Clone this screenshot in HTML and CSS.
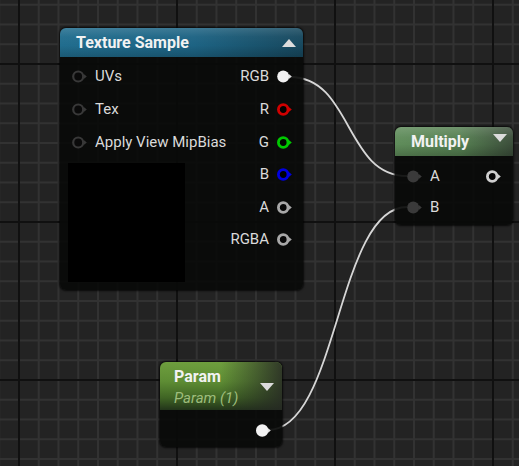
FILE: index.html
```html
<!DOCTYPE html>
<html>
<head>
<meta charset="utf-8">
<link rel="stylesheet" href="styles.css">
</head>
<body>
<div class="canvas">
  <svg class="wires" width="519" height="466" viewBox="0 0 519 466">
    <path d="M 290 77 C 352 77, 345 176, 407 176" />
    <path d="M 268 430 C 338 430, 337 207, 407 207" />
  </svg>

  <div class="node tex">
    <div class="head head-blue">
      <span class="title">Texture Sample</span>
      <svg class="tri" width="14" height="8" viewBox="0 0 14 8"><polygon points="0,8 14,8 7,0"/></svg>
    </div>
    <div class="body tex-body">
      <div class="col inputs">
        <div class="row in"><svg class="pin" width="15" height="13" viewBox="0 0 15 13"><circle class="p-empty" cx="6.2" cy="6.5" r="5"/><polygon class="arr-dark" points="11.8,4 14.8,6.5 11.8,9"/></svg><span class="lbl">UVs</span></div>
        <div class="row in"><svg class="pin" width="15" height="13" viewBox="0 0 15 13"><circle class="p-empty" cx="6.2" cy="6.5" r="5"/><polygon class="arr-dark" points="11.8,4 14.8,6.5 11.8,9"/></svg><span class="lbl">Tex</span></div>
        <div class="row in"><svg class="pin" width="15" height="13" viewBox="0 0 15 13"><circle class="p-empty" cx="6.2" cy="6.5" r="5"/><polygon class="arr-dark" points="11.8,4 14.8,6.5 11.8,9"/></svg><span class="lbl">Apply View MipBias</span></div>
        <div class="preview"></div>
      </div>
      <div class="col outputs">
        <div class="row out"><span class="lbl">RGB</span><svg class="pin" width="15" height="13" viewBox="0 0 15 13"><circle class="p-white" cx="6.2" cy="6.5" r="6"/><polygon class="arr-white" points="11.8,4 14.8,6.5 11.8,9"/></svg></div>
        <div class="row out"><span class="lbl">R</span><svg class="pin" width="15" height="13" viewBox="0 0 15 13"><circle class="p-red" cx="6.2" cy="6.5" r="4.8"/><polygon class="arr-red" points="11.8,4 14.8,6.5 11.8,9"/></svg></div>
        <div class="row out"><span class="lbl">G</span><svg class="pin" width="15" height="13" viewBox="0 0 15 13"><circle class="p-green" cx="6.2" cy="6.5" r="4.8"/><polygon class="arr-green" points="11.8,4 14.8,6.5 11.8,9"/></svg></div>
        <div class="row out"><span class="lbl">B</span><svg class="pin" width="15" height="13" viewBox="0 0 15 13"><circle class="p-blue" cx="6.2" cy="6.5" r="4.8"/><polygon class="arr-blue" points="11.8,4 14.8,6.5 11.8,9"/></svg></div>
        <div class="row out"><span class="lbl">A</span><svg class="pin" width="15" height="13" viewBox="0 0 15 13"><circle class="p-grey" cx="6.2" cy="6.5" r="4.8"/><polygon class="arr-grey" points="11.8,4 14.8,6.5 11.8,9"/></svg></div>
        <div class="row out"><span class="lbl">RGBA</span><svg class="pin" width="15" height="13" viewBox="0 0 15 13"><circle class="p-grey" cx="6.2" cy="6.5" r="4.8"/><polygon class="arr-grey" points="11.8,4 14.8,6.5 11.8,9"/></svg></div>
      </div>
    </div>
  </div>

  <div class="node mul">
    <div class="head head-sage">
      <span class="title">Multiply</span>
      <svg class="tri tri-down" width="14" height="8" viewBox="0 0 14 8"><polygon points="0,0 14,0 7,8"/></svg>
    </div>
    <div class="body mul-body">
      <div class="col inputs">
        <div class="row in row-31"><svg class="pin" width="15" height="13" viewBox="0 0 15 13"><circle class="p-conn" cx="6.2" cy="6.5" r="6"/><polygon class="arr-conn" points="11.8,4 14.8,6.5 11.8,9"/></svg><span class="lbl">A</span></div>
        <div class="row in row-31"><svg class="pin" width="15" height="13" viewBox="0 0 15 13"><circle class="p-conn" cx="6.2" cy="6.5" r="6"/><polygon class="arr-conn" points="11.8,4 14.8,6.5 11.8,9"/></svg><span class="lbl">B</span></div>
      </div>
      <div class="col outputs">
        <div class="row out row-31"><svg class="pin" width="15" height="13" viewBox="0 0 15 13"><circle class="p-light" cx="6.2" cy="6.5" r="4.8"/><polygon class="arr-light" points="11.8,4 14.8,6.5 11.8,9"/></svg></div>
      </div>
    </div>
  </div>

  <div class="node param">
    <div class="head head-green">
      <div class="titles">
        <span class="title">Param</span>
        <span class="sub">Param (1)</span>
      </div>
      <svg class="tri" width="14" height="8" viewBox="0 0 14 8"><polygon points="0,0 14,0 7,8"/></svg>
    </div>
    <div class="body param-body">
      <div class="row out row-31"><svg class="pin" width="15" height="13" viewBox="0 0 15 13"><circle class="p-white" cx="6.2" cy="6.5" r="6.2"/><polygon class="arr-white" points="11.8,4 14.8,6.5 11.8,9"/></svg></div>
    </div>
  </div>
</div>
</body>
</html>
```

FILE: styles.css
```css
html, body {
  margin: 0;
  padding: 0;
  background: #232323;
}

.canvas {
  position: relative;
  width: 519px;
  height: 466px;
  overflow: hidden;
  font-family: Roboto, "Liberation Sans", sans-serif;
  background-color: #232323;
  background-image:
    linear-gradient(to right, #101010 2px, transparent 2px),
    linear-gradient(to bottom, #101010 2px, transparent 2px),
    linear-gradient(to right, #323232 2px, transparent 2px),
    linear-gradient(to bottom, #323232 2px, transparent 2px);
  background-size: 158px 158px, 158px 158px, 19.75px 19.75px, 19.75px 19.75px;
  background-position: 18px 63px, 18px 63px, 18px 63px, 18px 63px;
}

.wires {
  position: absolute;
  left: 0;
  top: 0;
}
.wires path {
  fill: none;
  stroke: #d6d6d6;
  stroke-width: 1.8;
}

.node {
  position: absolute;
  display: flex;
  flex-direction: column;
  border-radius: 6px;
  background: rgba(9, 10, 9, 0.92);
  box-shadow: 0 0 2px 1px rgba(0, 0, 0, 0.75);
  overflow: hidden;
}

.tex { left: 60px; top: 28px; width: 243px; height: 262px; }
.mul { left: 395px; top: 127px; width: 118px; height: 98px; }
.param { left: 160px; top: 362px; width: 122px; height: 85px; }

.head {
  display: flex;
  align-items: center;
  justify-content: space-between;
  height: 29px;
  padding: 0 7px 0 16px;
  box-sizing: border-box;
  flex: none;
}

.head-blue {
  background:
    linear-gradient(180deg, rgba(255,255,255,0.14) 0, rgba(255,255,255,0.03) 30%, rgba(0,0,0,0) 60%, rgba(0,0,0,0.18) 100%),
    linear-gradient(90deg, #216d8e 0%, #1d6383 55%, #17485e 100%);
}

.head-sage {
  background:
    linear-gradient(180deg, rgba(255,255,255,0.16) 0, rgba(255,255,255,0.04) 35%, rgba(0,0,0,0) 60%, rgba(0,0,0,0.2) 100%),
    linear-gradient(90deg, #5f8c5a 0%, #557f51 55%, #3b4d3a 100%);
  padding-right: 6px;
}

.head-green {
  height: 48px;
  align-items: flex-start;
  padding: 6px 8px 0 14px;
  background:
    linear-gradient(90deg, rgba(40,40,40,0) 50%, rgba(38,40,36,0.85) 100%),
    linear-gradient(180deg, #6e9e3e 0%, #5e8d34 40%, #3f6424 75%, #22341a 100%);
}

.title {
  color: #f2f2f2;
  font-weight: bold;
  font-size: 16px;
  line-height: 18px;
}

.titles {
  display: flex;
  flex-direction: column;
  gap: 3px;
}

.sub {
  color: #9ebd7c;
  font-style: italic;
  font-size: 15px;
  line-height: 18px;
}

.tri polygon { fill: #dcdcdc; }
.tri-down { margin-bottom: 7px; }
.head-green .tri { margin-top: 15px; }

.body {
  flex: 1;
  display: flex;
  justify-content: space-between;
}

.tex-body { padding: 3.7px 11px 0 8px; }
.mul-body { padding: 4.5px 12px 0 12px; }
.param-body { padding: 4.5px 11px 0 0; justify-content: flex-end; }

.col {
  display: flex;
  flex-direction: column;
}
.outputs { align-items: flex-end; }

.row {
  display: flex;
  align-items: center;
  gap: 8px;
  height: 32.6px;
}
.row-31 { height: 31px; }
.tex-body .row.in { padding-left: 4px; }

.lbl {
  color: #dadada;
  font-size: 15px;
  line-height: 17px;
}

.pin { display: block; flex: none; }

.preview {
  margin-top: 4.5px;
  width: 117px;
  height: 119px;
  background: #000;
}

.p-empty { fill: #0a0a0a; stroke: #383838; stroke-width: 2.2; }
.arr-dark { fill: #383838; }
.p-white { fill: #f2f2f2; }
.arr-white { fill: #e0e0e0; }
.p-red { fill: #050000; stroke: #d00000; stroke-width: 2.8; }
.arr-red { fill: #d00000; }
.p-green { fill: #000500; stroke: #00c800; stroke-width: 2.8; }
.arr-green { fill: #00c800; }
.p-blue { fill: #000005; stroke: #0000e0; stroke-width: 2.8; }
.arr-blue { fill: #0000e0; }
.p-grey { fill: #080808; stroke: #a8a8a8; stroke-width: 2.8; }
.arr-grey { fill: #a8a8a8; }
.p-conn { fill: #3a3a3a; }
.arr-conn { fill: #3a3a3a; }
.p-light { fill: #050505; stroke: #cfcfcf; stroke-width: 2.8; }
.arr-light { fill: #cfcfcf; }
```
